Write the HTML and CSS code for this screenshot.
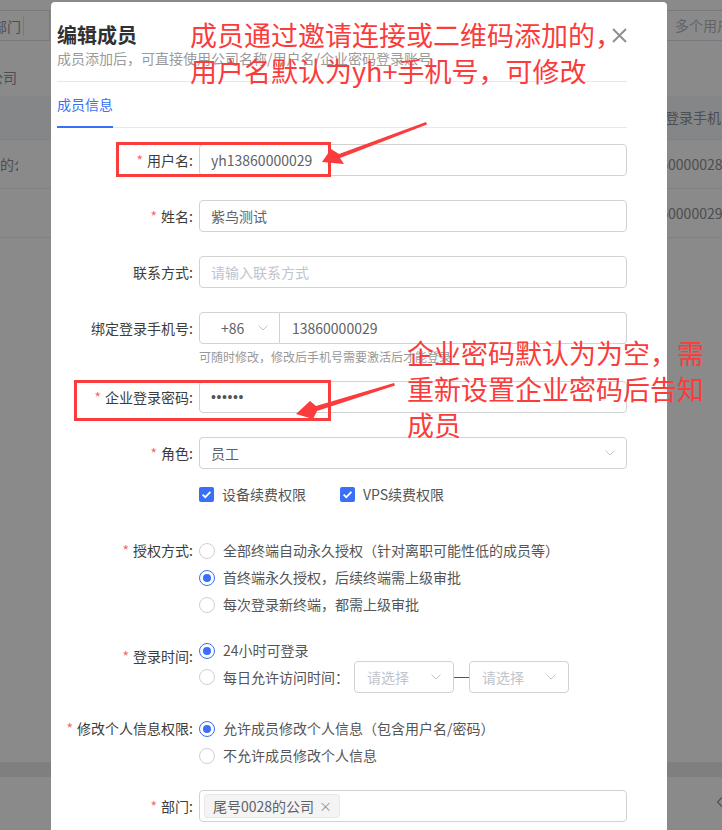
FILE: index.html
```html
<!doctype html>
<html lang="zh-CN">
<head>
	<meta charset="UTF-8">
	<title>编辑成员</title>
	<link rel="stylesheet" href="styles.css">
</head>
<body>
	<!-- 背景页面（被遮罩盖住） -->
	<div class="page">
		<div class="filter-bar">
			<div class="filter filter-left"><span class="filter-name">部门</span></div>
			<div class="filter filter-right"><span class="filter-colon">:</span><div class="filter-box">多个用户名用逗号分隔</div></div>
		</div>
		<div class="crumb"><span>公司</span></div>
		<div class="list">
			<div class="list-row list-head"><div class="cell cell-left"></div><div class="cell">绑定登录手机号</div></div>
			<div class="list-row"><div class="cell cell-left"><span>尾号0028的公司</span></div><div class="cell">13860000028</div></div>
			<div class="list-row"><div class="cell cell-left"></div><div class="cell">13860000029</div></div>
		</div>
		<div class="page-fill"></div>
		<div class="page-band"></div>
		<div class="pager">
			<svg class="pager-prev" width="8" height="10" viewBox="0 0 8 10"><polyline points="6,0.5 1.5,5 6,9.5" fill="none" stroke="#909399" stroke-width="1.2"/></svg>
		</div>
	</div>
	<div class="mask"></div>

	<!-- 弹窗 -->
	<div class="dialog">
		<div class="dialog-head">
			<div class="dialog-title">编辑成员</div>
			<div class="dialog-desc">成员添加后，可直接使用公司名称/用户名/企业密码登录账号</div>
			<span class="dialog-close">
				<svg width="15" height="15" viewBox="0 0 15 15"><path d="M1 1L14 14M14 1L1 14" stroke="#8c8c8c" stroke-width="1.8" fill="none"/></svg>
			</span>
		</div>
		<div class="tabs"><div class="tab active">成员信息</div></div>

		<div class="form">
			<div class="form-item">
				<div class="label"><i class="req">*</i>用户名:</div>
				<div class="control"><div class="input">yh13860000029</div></div>
			</div>
			<div class="form-item">
				<div class="label"><i class="req">*</i>姓名:</div>
				<div class="control"><div class="input">紫鸟测试</div></div>
			</div>
			<div class="form-item">
				<div class="label">联系方式:</div>
				<div class="control"><div class="input placeholder">请输入联系方式</div></div>
			</div>
			<div class="form-item item-phone">
				<div class="label">绑定登录手机号:</div>
				<div class="control">
					<div class="phone">
						<div class="input phone-code">+86
							<svg class="arrow" width="10" height="6" viewBox="0 0 10 6"><polyline points="0.5,0.5 5,5 9.5,0.5" fill="none" stroke="#c0c4cc" stroke-width="1"/></svg>
						</div>
						<div class="input phone-num">13860000029</div>
					</div>
					<div class="help">可随时修改，修改后手机号需要激活后才能登录</div>
				</div>
			</div>
			<div class="form-item">
				<div class="label"><i class="req">*</i>企业登录密码:</div>
				<div class="control"><div class="input pwd">&#8226;&#8226;&#8226;&#8226;&#8226;&#8226;</div></div>
			</div>
			<div class="form-item item-role">
				<div class="label"><i class="req">*</i>角色:</div>
				<div class="control">
					<div class="input select">员工
						<svg class="arrow" width="10" height="6" viewBox="0 0 10 6"><polyline points="0.5,0.5 5,5 9.5,0.5" fill="none" stroke="#c0c4cc" stroke-width="1"/></svg>
					</div>
				</div>
			</div>
			<div class="form-item item-checks">
				<div class="label"></div>
				<div class="control checks">
					<span class="check"><svg width="15" height="15" viewBox="0 0 15 15"><rect width="15" height="15" rx="2" fill="#3a6ff7"/><polyline points="3.6,7.6 6.3,10.2 11.4,4.8" fill="none" stroke="#fff" stroke-width="1.8"/></svg>设备续费权限</span>
					<span class="check"><svg width="15" height="15" viewBox="0 0 15 15"><rect width="15" height="15" rx="2" fill="#3a6ff7"/><polyline points="3.6,7.6 6.3,10.2 11.4,4.8" fill="none" stroke="#fff" stroke-width="1.8"/></svg>VPS续费权限</span>
				</div>
			</div>
			<div class="form-item item-radios item-auth">
				<div class="label"><i class="req">*</i>授权方式:</div>
				<div class="control">
					<div class="radio"><span class="dot"></span>全部终端自动永久授权（针对离职可能性低的成员等）</div>
					<div class="radio"><span class="dot on"></span>首终端永久授权，后续终端需上级审批</div>
					<div class="radio"><span class="dot"></span>每次登录新终端，都需上级审批</div>
				</div>
			</div>
			<div class="form-item item-radios item-time">
				<div class="label"><i class="req">*</i>登录时间:</div>
				<div class="control">
					<div class="radio radio-short"><span class="dot on"></span>24小时可登录</div>
					<div class="radio radio-range"><span class="dot"></span>每日允许访问时间：
						<div class="input select time placeholder">请选择
							<svg class="arrow" width="10" height="6" viewBox="0 0 10 6"><polyline points="0.5,0.5 5,5 9.5,0.5" fill="none" stroke="#c0c4cc" stroke-width="1"/></svg>
						</div>
						<span class="range-dash"></span>
						<div class="input select time placeholder">请选择
							<svg class="arrow" width="10" height="6" viewBox="0 0 10 6"><polyline points="0.5,0.5 5,5 9.5,0.5" fill="none" stroke="#c0c4cc" stroke-width="1"/></svg>
						</div>
					</div>
				</div>
			</div>
			<div class="form-item item-radios item-modify">
				<div class="label"><i class="req">*</i>修改个人信息权限:</div>
				<div class="control">
					<div class="radio"><span class="dot on"></span>允许成员修改个人信息（包含用户名/密码）</div>
					<div class="radio"><span class="dot"></span>不允许成员修改个人信息</div>
				</div>
			</div>
			<div class="form-item">
				<div class="label"><i class="req">*</i>部门:</div>
				<div class="control">
					<div class="input tags"><span class="tag">尾号0028的公司<span class="tag-close">&#215;</span></span></div>
				</div>
			</div>
		</div>
	</div>

	<!-- 标注 -->
	<div class="note note-1">成员通过邀请连接或二维码添加的，<br>用户名默认为yh+手机号，可修改</div>
	<div class="note note-2">企业密码默认为为空，需<br>重新设置企业密码后告知<br>成员</div>
	<div class="mark mark-1"></div>
	<div class="mark mark-2"></div>
	<svg class="arrows" width="722" height="830" viewBox="0 0 722 830">
		<polygon points="426,122 339,154 331,149 322,162 344,164 340,158 427,124.5" fill="#fa3c3c"/>
		<polygon points="394,383 316,406 310,401 296,414 313,419 317,411 395,385.5" fill="#fa3c3c"/>
	</svg>
</body>
</html>
```

FILE: styles.css
```css
html,
body{
	margin: 0;
	height: 100%;
	overflow: hidden;
}
body{
	position: relative;
	width: 722px;
	height: 830px;
	font: 14px/1.5 "Noto Sans CJK SC", "Noto Sans", sans-serif;
	color: #606266;
	background: #fff;
}

/* 背景页面 */
.page{
	height: 830px;
	display: flex;
	flex-direction: column;
	color: #8e9096;
}
.filter-bar{
	display: flex;
	justify-content: space-between;
	padding-top: 10px;
	height: 41px;
	box-sizing: border-box;
}
.filter{
	display: flex;
	align-items: center;
	height: 31px;
	white-space: nowrap;
}
.filter-left{
	margin-left: -10px;
	width: 60px;
	border: 1px solid #dcdfe6;
	border-left: 0;
	box-sizing: border-box;
}
.filter-name{
	padding-left: 3px;
	padding-right: 2px;
	border-right: 1px solid #dcdfe6;
	line-height: 20px;
}
.filter-right{
	width: 62px;
	overflow: hidden;
}
.filter-colon{
	padding: 0 2px 0 0;
}
.filter-box{
	height: 31px;
	line-height: 29px;
	box-sizing: border-box;
	border: 1px solid #dcdfe6;
	border-right: 0;
	padding-left: 8px;
	color: #b5b8be;
}
.crumb{
	height: 55px;
	width: 18px;
	overflow: hidden;
	box-sizing: border-box;
	padding-top: 25px;
	line-height: 22px;
	white-space: nowrap;
}
.crumb span{
	margin-left: -11px;
}
.list-row{
	display: grid;
	grid-template-columns: 637px 1fr;
	height: 48px;
	border-bottom: 1px solid #ebeef5;
	white-space: nowrap;
}
.list-head{
	height: 43px;
	background: #f5f7fa;
}
.cell{
	display: flex;
	align-items: center;
}
.cell-left{
	width: 18px;
	overflow: hidden;
}
.cell-left span{
	margin-left: -59px;
}
.page-fill{
	flex: 1;
}
.page-band{
	height: 15px;
	background: #ebebeb;
}
.pager{
	height: 53px;
	padding-left: 716px;
	padding-top: 20px;
	box-sizing: border-box;
}
.pager-prev{
	display: block;
}
.mask{
	position: absolute;
	top: 0;
	left: 0;
	right: 0;
	bottom: 0;
	background: rgba(0, 0, 0, .46);
}

/* 弹窗 */
.dialog{
	position: absolute;
	left: 51px;
	top: 2px;
	width: 616px;
	height: 900px;
	box-sizing: border-box;
	padding: 19px 40px 0 6px;
	background: #fff;
	border-radius: 4px;
}
.dialog-head{
	position: relative;
	padding-bottom: 14px;
	border-bottom: 1px solid #e8e8e8;
}
.dialog-title{
	font-size: 20px;
	font-weight: bold;
	line-height: 28px;
	color: #303133;
}
.dialog-desc{
	font-size: 14px;
	line-height: 18px;
	color: #9a9a9a;
	white-space: nowrap;
}
.dialog-close{
	position: absolute;
	right: 0;
	top: 7px;
	width: 15px;
	height: 15px;
}
.dialog-close svg{
	display: block;
}
.tabs{
	display: flex;
	border-bottom: 1px solid #e8e8e8;
}
.tab{
	height: 46px;
	line-height: 44px;
	box-sizing: border-box;
	margin-bottom: -1px;
	font-size: 14px;
}
.tab.active{
	color: #3a6ff7;
	border-bottom: 2px solid #3a6ff7;
}

/* 表单 */
.form{
	padding-top: 16px;
}
.form-item{
	display: flex;
	align-items: flex-start;
	margin-bottom: 24px;
}
.label{
	flex: none;
	width: 142px;
	box-sizing: border-box;
	padding-right: 6px;
	text-align: right;
	line-height: 32px;
	color: #3c3c3c;
	white-space: nowrap;
}
.req{
	font-style: normal;
	color: #f56c6c;
	margin-right: 4px;
}
.control{
	width: 428px;
}
.input{
	position: relative;
	height: 32px;
	box-sizing: border-box;
	border: 1px solid #d2d2d2;
	border-radius: 4px;
	padding: 0 11px;
	line-height: 30px;
	color: #606266;
	white-space: nowrap;
}
.placeholder{
	color: #c0c4cc;
}
.arrow{
	position: absolute;
	right: 11px;
	top: 12px;
}
.phone{
	display: flex;
}
.phone-code{
	width: 81px;
	flex: none;
	padding-left: 21px;
	border-radius: 4px 0 0 4px;
}
.phone-num{
	flex: 1;
	border-left: 0;
	border-radius: 0 4px 4px 0;
	padding-left: 12px;
}
.help{
	margin-top: 4px;
	font-size: 12px;
	line-height: 18px;
	color: #999;
}
.item-phone{
	margin-bottom: 15px;
}
.pwd{
	font-family: "Liberation Sans", sans-serif;
	font-size: 14px;
	letter-spacing: 0.6px;
	color: #555;
}
.item-role{
	margin-bottom: 15px;
}
.checks{
	display: flex;
	line-height: 20px;
}
.check{
	display: inline-flex;
	align-items: center;
	margin-right: 34px;
	color: #555;
}
.check svg{
	margin-right: 8px;
}
.item-checks{
	margin-bottom: 33px;
}
.item-checks .label{
	line-height: 20px;
}

/* 单选 */
.item-radios .label{
	line-height: 27px;
}
.radio{
	display: flex;
	align-items: center;
	height: 27px;
	color: #555;
	white-space: nowrap;
}
.dot{
	position: relative;
	flex: none;
	width: 16px;
	height: 16px;
	box-sizing: border-box;
	border: 1px solid #d0d0d0;
	border-radius: 50%;
	margin-right: 8px;
}
.dot.on{
	border-color: #3a6ff7;
}
.dot.on::after{
	content: "";
	position: absolute;
	left: 3px;
	top: 3px;
	width: 8px;
	height: 8px;
	border-radius: 50%;
	background: #3a6ff7;
}
.item-auth{
	margin-bottom: 22px;
}
.item-time{
	margin-bottom: 22px;
}
.item-time .label{
	line-height: 32px;
}
.radio-short{
	height: 21px;
}
.radio-range{
	height: 32px;
}
.time{
	width: 100px;
	margin-left: 5px;
	padding-left: 12px;
}
.time .arrow{
	right: 12px;
}
.range-dash{
	width: 15px;
	height: 1px;
	background: #555;
}
.time + .range-dash + .time{
	margin-left: 0;
}
.item-modify{
	margin-bottom: 21px;
}
.tags{
	display: flex;
	align-items: center;
	padding-left: 4px;
}
.tag{
	display: inline-flex;
	align-items: center;
	height: 24px;
	box-sizing: border-box;
	padding: 0 7px 0 8px;
	background: #f4f4f5;
	border: 1px solid #e9e9eb;
	border-radius: 3px;
	line-height: 22px;
	color: #606266;
}
.tag-close{
	margin-left: 5px;
	font-size: 13px;
	color: #909399;
}

/* 标注 */
.note{
	position: absolute;
	color: #fa3c3c;
	font-size: 27px;
	line-height: 36px;
	white-space: nowrap;
}
.note-1{
	left: 190px;
	top: 17px;
}
.note-2{
	left: 407px;
	top: 335px;
}
.mark{
	position: absolute;
	box-sizing: border-box;
	border: 3px solid #fa3c3c;
}
.mark-1{
	left: 116px;
	top: 142px;
	width: 215px;
	height: 35px;
}
.mark-2{
	left: 74px;
	top: 380px;
	width: 257px;
	height: 41px;
}
.arrows{
	position: absolute;
	left: 0;
	top: 0;
}
```
